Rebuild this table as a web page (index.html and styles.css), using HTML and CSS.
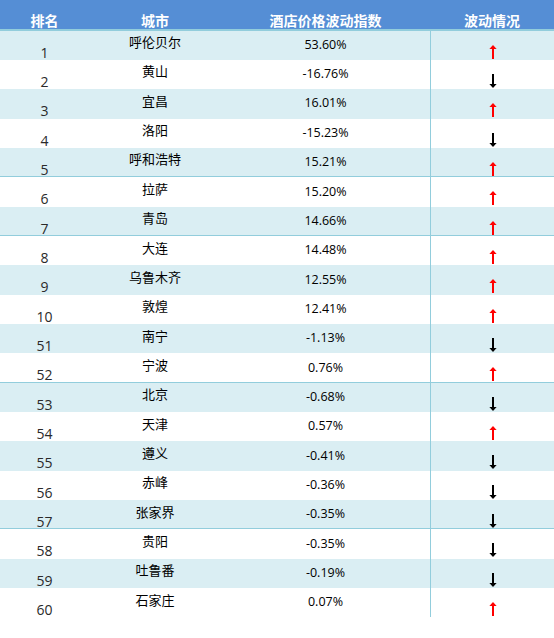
FILE: index.html
```html
<!DOCTYPE html>
<html lang="zh-CN">
<head>
<meta charset="utf-8">
<title>酒店价格波动指数</title>
<link rel="stylesheet" href="styles.css">
</head>
<body>
<div class="table">
  <div class="head">
    <span>排名</span><span>城市</span><span>酒店价格波动指数</span><span>波动情况</span>
  </div>
  <div id="rows"></div>
</div>
<svg width="0" height="0" class="defs" aria-hidden="true">
  <defs>
    <symbol id="up" viewBox="0 0 8 14">
      <polygon points="4,0 7.6,4 0.4,4" fill="#ff0000"/>
      <rect x="3" y="3.5" width="2" height="10.5" fill="#ff0000"/>
    </symbol>
    <symbol id="down" viewBox="0 0 8 14">
      <rect x="3" y="0" width="2" height="10.5" fill="#000"/>
      <polygon points="0.4,10 7.6,10 4,14" fill="#000"/>
    </symbol>
  </defs>
</svg>
<script>
var data = [
  [1,"呼伦贝尔","53.60%","up"],
  [2,"黄山","-16.76%","down"],
  [3,"宜昌","16.01%","up"],
  [4,"洛阳","-15.23%","down"],
  [5,"呼和浩特","15.21%","up",1],
  [6,"拉萨","15.20%","up"],
  [7,"青岛","14.66%","up",1],
  [8,"大连","14.48%","up"],
  [9,"乌鲁木齐","12.55%","up"],
  [10,"敦煌","12.41%","up"],
  [51,"南宁","-1.13%","down"],
  [52,"宁波","0.76%","up",1],
  [53,"北京","-0.68%","down"],
  [54,"天津","0.57%","up"],
  [55,"遵义","-0.41%","down"],
  [56,"赤峰","-0.36%","down"],
  [57,"张家界","-0.35%","down",1],
  [58,"贵阳","-0.35%","down"],
  [59,"吐鲁番","-0.19%","down"],
  [60,"石家庄","0.07%","up"]
];
var html = "";
data.forEach(function(d, i){
  var cls = "row" + (i % 2 === 0 ? " alt" : "") + (d[4] ? " sep" : "");
  html += '<div class="' + cls + '">' +
    '<span class="rank">' + d[0] + '</span>' +
    '<span class="city">' + d[1] + '</span>' +
    '<span class="pct">' + d[2] + '</span>' +
    '<span class="trend"><svg class="arrow" width="8" height="14"><use href="#' + d[3] + '"/></svg></span>' +
    '</div>';
});
document.getElementById("rows").innerHTML = html;
</script>
</body>
</html>
```
FILE: styles.css
```css
body {
  margin: 0;
  background: #ffffff;
  font-family: "Open Sans", "Noto Sans CJK SC", sans-serif;
  color: #000;
}

.defs {
  position: absolute;
}

.table {
  width: 554px;
}

.head {
  display: grid;
  grid-template-columns: 89px 132px 209px 124px;
  height: 28.5px;
  background: #558ed5;
  border-bottom: 2px solid #92cddc;
  color: #ffffff;
  font-family: "Noto Sans CJK SC", sans-serif;
  font-weight: bold;
  font-size: 14px;
}

.head span {
  text-align: center;
  line-height: 14px;
  padding-top: 12.5px;
}

.row {
  display: grid;
  grid-template-columns: 89px 132px 209px 124px;
  height: 29.35px;
  box-sizing: border-box;
}

.row.alt {
  background: #daeef3;
}

.row.sep {
  border-bottom: 1px solid #92cddc;
}

.rank {
  text-align: center;
  font-size: 14px;
  line-height: 14px;
  padding-top: 15px;
  color: #2a2a2a;
}

.city {
  text-align: center;
  font-family: "Noto Sans CJK SC", sans-serif;
  font-size: 13px;
  line-height: 16px;
  padding-top: 3.6px;
}

.pct {
  text-align: center;
  font-size: 12.5px;
  line-height: 16px;
  padding-top: 6.3px;
}

.trend {
  border-left: 1px solid #92cddc;
  display: flex;
  justify-content: center;
  align-items: flex-start;
  padding-top: 14px;
}

.arrow {
  display: block;
}
```
